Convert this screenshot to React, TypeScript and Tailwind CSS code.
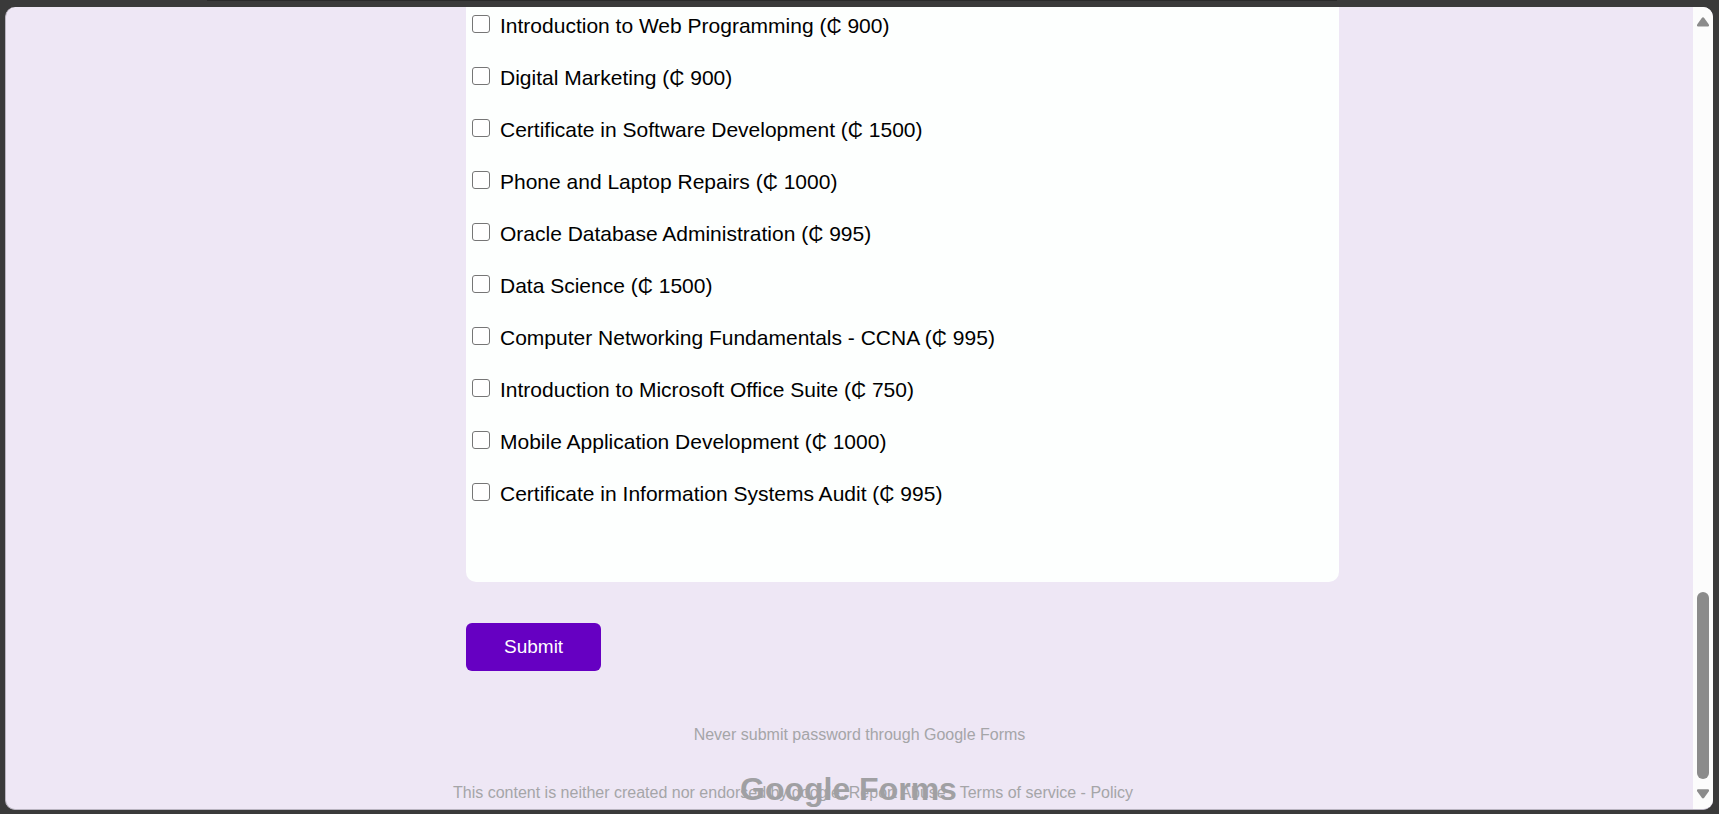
const courses = [
  { name: "Introduction to Web Programming", fee: 900 },
  { name: "Digital Marketing", fee: 900 },
  { name: "Certificate in Software Development", fee: 1500 },
  { name: "Phone and Laptop Repairs", fee: 1000 },
  { name: "Oracle Database Administration", fee: 995 },
  { name: "Data Science", fee: 1500 },
  { name: "Computer Networking Fundamentals - CCNA", fee: 995 },
  { name: "Introduction to Microsoft Office Suite", fee: 750 },
  { name: "Mobile Application Development", fee: 1000 },
  { name: "Certificate in Information Systems Audit", fee: 995 },
];

function CourseOption({ id, name, fee }: { id: string; name: string; fee: number }) {
  return (
    <li className="flex items-start gap-2.5">
      <input
        id={id}
        type="checkbox"
        name="courses"
        className="mt-px size-[18px] shrink-0 appearance-none rounded-[3px] border border-[#767676] bg-white checked:bg-[#6600c2]"
      />
      <label htmlFor={id} className="text-[21px] leading-6 text-black">
        {name} (₵ {fee})
      </label>
    </li>
  );
}

function ScrollTrack() {
  return (
    <div aria-hidden="true" className="flex w-5 shrink-0 flex-col items-center justify-between bg-[#fcfcfc] py-2.5">
      <svg width="12" height="10" viewBox="0 0 12 10" fill="#8b8b8b">
        <path d="M4.8 .9Q6 -.4 7.200 .9L11.700 7.200Q12.600 9.500 11 9.500H1Q-.6 9.500 .3 7.200Z" />
      </svg>
      <div className="flex grow flex-col justify-end pb-2.5">
        <div className="h-[187px] w-3 rounded-full bg-[#8b8b8b]" />
      </div>
      <svg width="12" height="10" viewBox="0 0 12 10" fill="#8b8b8b">
        <path d="M4.800 8.800Q6 10 7.200 8.800L11.700 2.500Q12.600 .3 11 .3H1Q-.6 .3 .3 2.500Z" />
      </svg>
    </div>
  );
}

export default function App() {
  return (
    <div className="flex h-screen flex-col bg-[#3a3a3a] pr-1.5 pb-1 pl-[5px] font-['Liberation_Sans',Arial,sans-serif]">
      <div className="h-[7px] shrink-0 pl-[202px]">
        <div className="h-px w-3/4 bg-[#2a2a2a]" />
      </div>
      <div className="flex min-h-0 grow overflow-hidden rounded-[10px] border-b border-l border-[#b9b4c0] bg-[#eee7f5]">
        <main className="min-w-0 grow overflow-hidden">
          <form
            className="ml-[460px] w-[873px] max-w-full"
            onSubmit={(event) => event.preventDefault()}
          >
            <ul className="flex flex-col gap-7 rounded-b-[10px] bg-[#fdfffe] pt-[7px] pr-1.5 pb-[76px] pl-1.5">
              {courses.map((course, index) => (
                <CourseOption key={course.name} id={`course-${index}`} {...course} />
              ))}
            </ul>
            <button
              type="submit"
              className="mt-[41px] h-12 rounded-md bg-[#6600c2] px-[38px] text-[19px] text-white"
            >
              Submit
            </button>
          </form>
          <footer className="mt-[52px] text-base text-[#a5a5a8]">
            <p className="pl-5 text-center leading-6">Never submit password through Google Forms</p>
            <div className="relative mt-[34px]">
              <p className="ml-[447px] leading-6">
                This content is neither created nor endorsed by google. <a href="#report">Report Abuse</a> -{" "}
                <a href="#terms">Terms of service</a> - <a href="#policy">Policy</a>
              </p>
              <h2 className="absolute -top-2.5 left-[734px] text-[32px] leading-9 font-bold text-[#a0a0a3]">
                Google Forms
              </h2>
            </div>
          </footer>
        </main>
        <ScrollTrack />
      </div>
    </div>
  );
}
